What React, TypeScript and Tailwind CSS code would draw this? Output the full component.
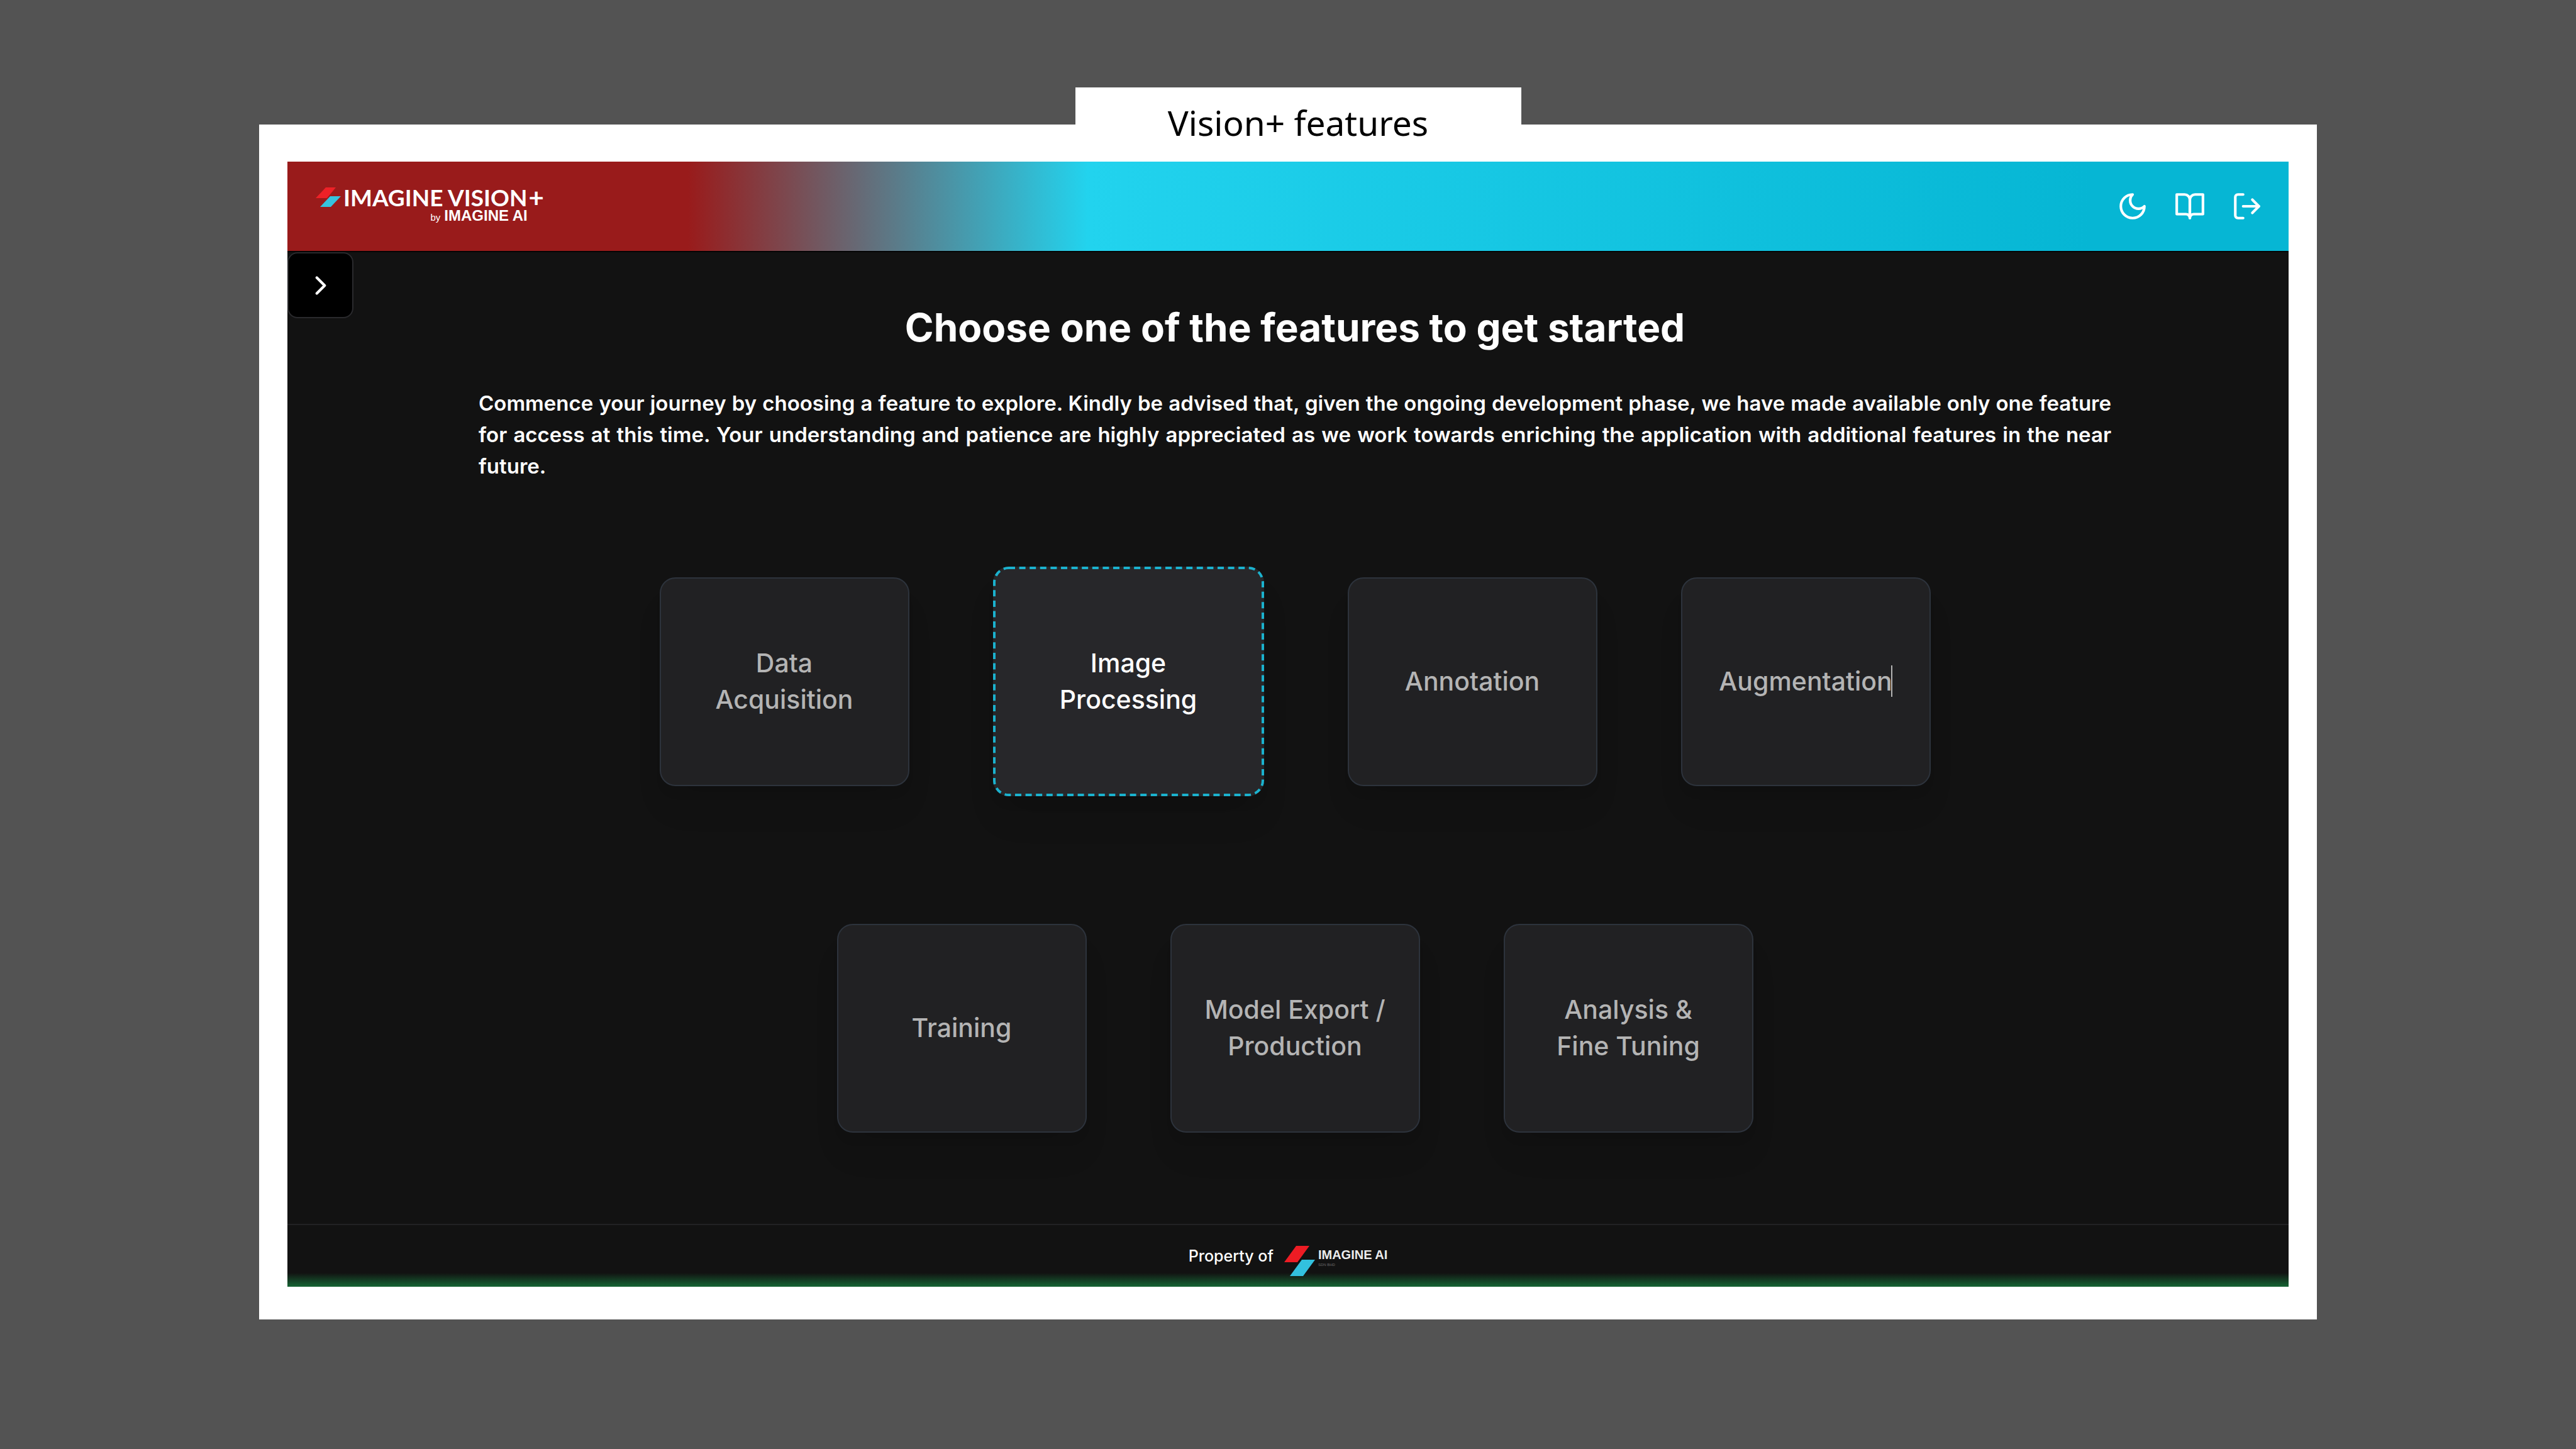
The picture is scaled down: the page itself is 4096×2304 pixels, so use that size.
type Feature = { lines: string[]; active?: boolean; caret?: boolean };

const firstRow: Feature[] = [
  { lines: ["Data", "Acquisition"] },
  { lines: ["Image", "Processing"], active: true },
  { lines: ["Annotation"] },
  { lines: ["Augmentation"], caret: true },
];

const secondRow: Feature[] = [
  { lines: ["Training"] },
  { lines: ["Model Export /", "Production"] },
  { lines: ["Analysis &", "Fine Tuning"] },
];

function Icon({ paths }: { paths: string[] }) {
  return (
    <svg
      viewBox="0 0 24 24"
      className="size-[50px]"
      fill="none"
      stroke="currentColor"
      strokeWidth="2"
      strokeLinecap="round"
      strokeLinejoin="round"
      aria-hidden="true"
    >
      {paths.map((d) => (
        <path key={d} d={d} />
      ))}
    </svg>
  );
}

function Header() {
  return (
    <header className="flex h-36 items-center justify-between border-b-2 border-[#040404] bg-[linear-gradient(90deg,#991b1b_20%,#22d3ee_40%,#06b6d4_90%)] pr-[41px] pl-[45px] text-white">
      <a href="#home" className="flex items-start pb-1" aria-label="Imagine Vision+ by Imagine AI">
        <svg viewBox="0 0 40 31" className="mt-0.5 h-[31px] w-10" aria-hidden="true">
          <path d="M16 0H32L18 17H0Z" fill="#ed2127" />
          <path d="M23 14H40L24 31H7Z" fill="#36c3de" />
        </svg>
        <span className="ml-1 flex flex-col font-['Lato',sans-serif]">
          <span className="flex items-center text-[37px] leading-9 font-bold">
            IMAGINE VISION
            <span className="ml-0.5 text-[42px] leading-9 font-bold">+</span>
          </span>
          <span className="flex items-baseline justify-end gap-1.5 pr-[26px] font-['Liberation_Sans',sans-serif] leading-[22px]">
            <span className="text-[15px]">by</span>
            <span className="text-2xl leading-[22px] font-bold">IMAGINE AI</span>
          </span>
        </span>
      </a>
      <nav className="flex items-center gap-[41px]" aria-label="Account">
        <button type="button" aria-label="Toggle theme">
          <Icon paths={["M12 3a6 6 0 0 0 9 9 9 9 0 1 1-9-9Z"]} />
        </button>
        <button type="button" aria-label="Documentation">
          <Icon
            paths={[
              "M2 3h6a4 4 0 0 1 4 4v14a3 3 0 0 0-3-3H2z",
              "M22 3h-6a4 4 0 0 0-4 4v14a3 3 0 0 1 3-3h7z",
            ]}
          />
        </button>
        <button type="button" aria-label="Log out">
          <Icon
            paths={["M9 21H5a2 2 0 0 1-2-2V5a2 2 0 0 1 2-2h4", "M16 17l5-5-5-5", "M21 12H9"]}
          />
        </button>
      </nav>
    </header>
  );
}

function FeatureCard({ lines, active, caret }: Feature) {
  return (
    <button
      type="button"
      className={
        active
          ? "relative flex h-[365px] w-[431px] items-center justify-center rounded-[25px] bg-[#27272a] pb-0.5 text-[41px] leading-[58px] font-[550] text-white shadow-[0_41px_52px_-10px_rgba(0,0,0,0.1),0_17px_21px_-12px_rgba(0,0,0,0.1)]"
          : "relative flex h-[332px] w-[397px] items-center justify-center rounded-[25px] border-2 border-[#2d333c] bg-[#212123] pb-0.5 text-[41px] leading-[58px] font-[550] text-[#b4b4b4] shadow-[0_41px_52px_-10px_rgba(0,0,0,0.08),0_17px_21px_-12px_rgba(0,0,0,0.08)]"
      }
    >
      {active && (
        <svg className="absolute inset-0 size-full" aria-hidden="true">
          <rect
            x="2"
            y="2"
            rx="23"
            className="h-[calc(100%-4px)] w-[calc(100%-4px)]"
            fill="none"
            stroke="#1bb2ce"
            strokeWidth="4"
            strokeDasharray="10 6.6"
          />
        </svg>
      )}
      <span className="relative">
        {lines.map((line) => (
          <span key={line} className="block whitespace-nowrap">
            {line}
          </span>
        ))}
        {caret && <span className="absolute top-1 right-0 h-[50px] w-0.5 bg-[#b4b4b4]" />}
      </span>
    </button>
  );
}

function Footer() {
  return (
    <footer className="flex h-[100px] items-center justify-center border-t-2 border-[#222224] bg-[linear-gradient(0deg,#166534_0px,#121212_22px)] text-white">
      <p className="text-[25px] leading-9 font-[550]">Property of</p>
      <a href="#company" className="ml-[17px] flex items-start pt-4" aria-label="Imagine AI">
        <svg viewBox="0 0 49 48" className="h-12 w-[49px]" aria-hidden="true">
          <path d="M19 0H40L21 26H0Z" fill="#ed1c24" />
          <path d="M28 22H49L30 48H9Z" fill="#32c1de" />
        </svg>
        <span className="mt-1 ml-[5px] flex flex-col font-['Liberation_Sans',sans-serif]">
          <span className="text-[20px] leading-5 font-bold text-[#ececec]">IMAGINE AI</span>
          <span className="text-[6px] leading-3 text-[#6a6a6a]">SDN BHD</span>
        </span>
      </a>
    </footer>
  );
}

export default function App() {
  return (
    <div className="min-h-screen bg-[#535353] px-[412px] pt-[139px] pb-[206px] font-['Inter',sans-serif]">
      <div className="relative z-10 flex justify-center pl-8">
        <h1 className="h-[118px] w-[709px] bg-white pt-[26px] text-center font-['Noto_Sans',sans-serif] text-[55px] leading-[60px] text-black">
          Vision+ features
        </h1>
      </div>
      <div className="-mt-[59px] bg-white px-[45px] pt-[59px] pb-[52px]">
        <div className="bg-[#121212]">
          <Header />
          <main className="relative pt-[82px] pr-0.5 pb-[145px] pl-6 text-white">
            <button
              type="button"
              aria-label="Open sidebar"
              className="absolute top-0 left-0 flex size-[105px] items-center justify-center rounded-2xl border-2 border-[#2a2a2d] bg-black"
            >
              <Icon paths={["M9 18l6-6-6-6"]} />
            </button>
            <h2 className="text-center text-[62px] leading-[75px] font-[650]">
              Choose one of the features to get started
            </h2>
            <p className="mt-[58px] px-[280px] text-justify text-[33px] leading-[50px] font-[570]">
              Commence your journey by choosing a feature to explore. Kindly be advised that, given the
              ongoing development phase, we have made available only one feature for access at this
              time. Your understanding and patience are highly appreciated as we work towards enriching
              the application with additional features in the near future.
            </p>
            <div className="mt-[135px] flex items-center justify-center gap-[133px]">
              {firstRow.map((feature) => (
                <FeatureCard key={feature.lines[0]} {...feature} />
              ))}
            </div>
            <div className="mt-[203px] flex items-center justify-center gap-[133px]">
              {secondRow.map((feature) => (
                <FeatureCard key={feature.lines[0]} {...feature} />
              ))}
            </div>
          </main>
          <Footer />
        </div>
      </div>
    </div>
  );
}
